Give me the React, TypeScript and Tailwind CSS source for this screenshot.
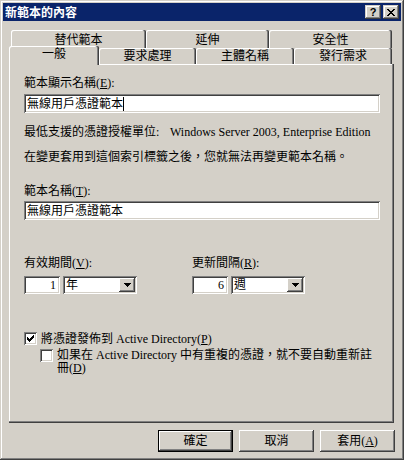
import React from 'react';

// Windows classic bevels
const frame =
  'shadow-[inset_-1px_-1px_#404040,inset_1px_1px_#d4d0c8,inset_-2px_-2px_#808080,inset_2px_2px_#ffffff]';
const raised =
  'shadow-[inset_-1px_-1px_#404040,inset_1px_1px_#ffffff,inset_-2px_-2px_#808080,inset_2px_2px_#d4d0c8]';
const sunken =
  'shadow-[inset_1px_1px_#808080,inset_-1px_-1px_#ffffff,inset_2px_2px_#404040,inset_-2px_-2px_#d4d0c8]';
const tabEdge = 'shadow-[inset_-1px_0_#404040,inset_-2px_0_#808080,inset_1px_1px_#ffffff]';
const panelEdge =
  'shadow-[inset_-1px_-1px_#404040,inset_-2px_-2px_#808080,inset_1px_1px_#ffffff]';

function U({ c }: { c: string }) {
  return <span className="underline">{c}</span>;
}

function CloseGlyph() {
  return (
    <svg width="8" height="7" viewBox="0 0 8 7" shapeRendering="crispEdges">
      <path
        d="M0 0h2v1H0zM6 0h2v1H6zM1 1h2v1H1zM5 1h2v1H5zM2 2h4v1H2zM3 3h2v1H3zM2 4h4v1H2zM1 5h2v1H1zM5 5h2v1H5zM0 6h2v1H0zM6 6h2v1H6z"
        fill="#000"
      />
    </svg>
  );
}

function CheckGlyph() {
  return (
    <svg width="7" height="7" viewBox="0 0 7 7" shapeRendering="crispEdges">
      <path
        d="M0 2h1v3H0zM1 3h1v3H1zM2 4h1v3H2zM3 3h1v3H3zM4 2h1v3H4zM5 1h1v3H5zM6 0h1v3H6z"
        fill="#000"
      />
    </svg>
  );
}

function Checkbox({ checked }: { checked?: boolean }) {
  return (
    <div className={`w-[13px] h-[13px] shrink-0 bg-white flex items-center justify-center ${sunken}`}>
      {checked && <CheckGlyph />}
    </div>
  );
}

function Combo({ value, num }: { value: string; num: string }) {
  return (
    <div className="flex gap-[3px]">
      <div className={`w-[36px] h-[18px] bg-white flex items-center justify-end pr-[4px] ${sunken}`}>
        {num}
      </div>
      <div className={`w-[74px] h-[18px] bg-white flex items-center pl-[3px] pr-[2px] ${sunken}`}>
        <span className="flex-1">{value}</span>
        <div className={`w-[16px] h-[14px] bg-[#d4d0c8] flex items-center justify-center ${raised}`}>
          <svg width="7" height="4" viewBox="0 0 7 4" shapeRendering="crispEdges">
            <path d="M0 0h7v1H0zM1 1h5v1H1zM2 2h3v1H2zM3 3h1v1H3z" fill="#000" />
          </svg>
        </div>
      </div>
    </div>
  );
}

function Button({ children, def }: { children: React.ReactNode; def?: boolean }) {
  return (
    <div
      className={`w-[75px] h-[22px] flex items-center justify-center bg-[#d4d0c8] ${raised} ${
        def ? 'border border-black' : ''
      }`}
    >
      {children}
    </div>
  );
}

export default function App() {
  return (
    <div
      className={`w-[404px] h-[460px] overflow-hidden bg-[#d4d0c8] p-[3px] text-[12px] leading-[12px] text-black font-['Liberation_Serif','Noto_Sans_CJK_TC',serif] ${frame}`}
    >
      {/* Title bar */}
      <div className="h-[18px] bg-[#0a246a] flex items-center pl-[2px] pr-[2px]">
        <span className="text-white font-bold font-['Noto_Sans_CJK_TC',sans-serif]">新範本的內容</span>
        <div className="ml-auto flex gap-[2px]">
          <div className={`w-[16px] h-[14px] bg-[#d4d0c8] flex items-center justify-center ${frame}`}>
            <span className="font-bold text-[11px] leading-[11px] font-['Liberation_Sans',sans-serif]">?</span>
          </div>
          <div className={`w-[16px] h-[14px] bg-[#d4d0c8] flex items-center justify-center ${frame}`}>
            <CloseGlyph />
          </div>
        </div>
      </div>

      {/* Tabs + panel */}
      <div className="ml-[6px] mt-[9px] w-[385px]">
        <div className="flex pl-[2px] h-[18px]">
          <div className={`w-[135px] h-full flex justify-center pt-[4px] rounded-t-[2px] ${tabEdge}`}>替代範本</div>
          <div className={`w-[123px] h-full flex justify-center pt-[4px] rounded-t-[2px] ${tabEdge}`}>延伸</div>
          <div className={`w-[123px] h-full flex justify-center pt-[4px] rounded-t-[2px] ${tabEdge}`}>安全性</div>
        </div>
        <div className="flex items-end h-[16px]">
          <div
            className={`relative z-10 -mb-px w-[90px] h-[19px] bg-[#d4d0c8] flex justify-center pt-[2px] rounded-t-[2px] ${tabEdge}`}
          >
            一般
          </div>
          <div className={`w-[97px] h-[16px] bg-[#d4d0c8] flex items-center justify-center rounded-t-[2px] ${tabEdge}`}>
            要求處理
          </div>
          <div className={`w-[98px] h-[16px] bg-[#d4d0c8] flex items-center justify-center rounded-t-[2px] ${tabEdge}`}>
            主體名稱
          </div>
          <div className={`w-[98px] h-[16px] bg-[#d4d0c8] flex items-center justify-center rounded-t-[2px] ${tabEdge}`}>
            發行需求
          </div>
        </div>

        <div className={`w-[385px] h-[359px] flex flex-col pl-[15px] pt-[13px] ${panelEdge}`}>
          <div className="h-[12px]">
            範本顯示名稱(<U c="E" />):
          </div>
          <div className={`mt-[5px] w-[356px] h-[19px] bg-white pl-[3px] flex items-center ${sunken}`}>
            無線用戶憑證範本
            <span className="w-px h-[14px] bg-black" />
          </div>

          <div className="mt-[13px] h-[12px] flex">
            <span className="w-[146px] shrink-0">最低支援的憑證授權單位:</span>
            <span>Windows Server 2003, Enterprise Edition</span>
          </div>
          <div className="mt-[13px] h-[12px]">在變更套用到這個索引標籤之後，您就無法再變更範本名稱。</div>

          <div className="mt-[22px] h-[12px]">
            範本名稱(<U c="T" />):
          </div>
          <div className={`mt-[4px] w-[356px] h-[19px] bg-white pl-[3px] flex items-center ${sunken}`}>
            無線用戶憑證範本
          </div>

          <div className="mt-[37px] flex">
            <div className="w-[168px] flex flex-col">
              <div className="h-[12px]">
                有效期間(<U c="V" />):
              </div>
              <div className="mt-[7px]">
                <Combo num="1" value="年" />
              </div>
            </div>
            <div className="flex flex-col">
              <div className="h-[12px]">
                更新間隔(<U c="R" />):
              </div>
              <div className="mt-[7px]">
                <Combo num="6" value="週" />
              </div>
            </div>
          </div>

          <div className="mt-[38px] h-[13px] flex items-center gap-[4px]">
            <Checkbox checked />
            <span>
              將憑證發佈到 Active Directory(<U c="P" />)
            </span>
          </div>
          <div className="mt-[4px] ml-[16px] flex items-start gap-[4px]">
            <Checkbox />
            <span className="leading-[13px]">
              如果在 Active Directory 中有重複的憑證，就不要自動重新註
              <br />
              冊(<U c="D" />)
            </span>
          </div>
        </div>
      </div>

      {/* Dialog buttons */}
      <div className="mt-[7px] ml-[155px] flex gap-[6px]">
        <Button def>確定</Button>
        <Button>取消</Button>
        <Button>
          套用(<U c="A" />)
        </Button>
      </div>
    </div>
  );
}
